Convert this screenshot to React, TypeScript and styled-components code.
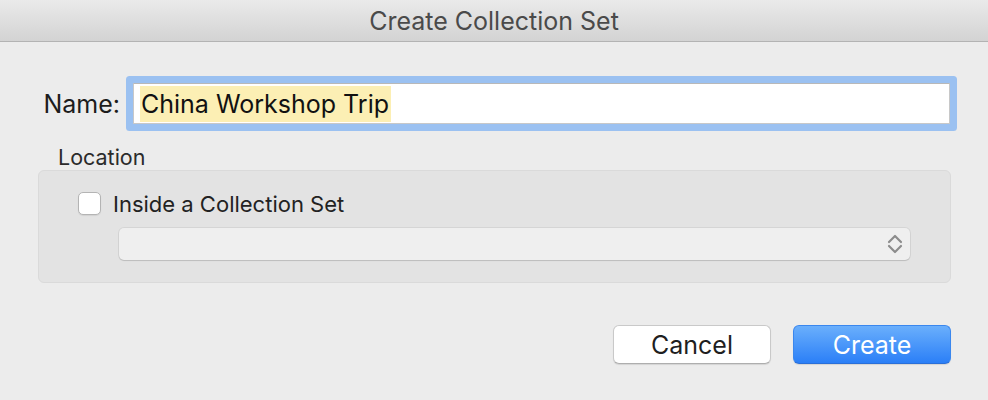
import React from "react";
import styled, { createGlobalStyle } from "styled-components";

const Global = createGlobalStyle`
  html, body { margin: 0; padding: 0; background: #ececec; }
  body { font-family: Inter, "Noto Sans", sans-serif; -webkit-font-smoothing: antialiased; }
  * { box-sizing: border-box; }
`;

const Window = styled.div`
  width: 988px;
  height: 400px;
  background: #ececec;
  display: flex;
  flex-direction: column;
  overflow: hidden;
`;

const TitleBar = styled.div`
  height: 42px;
  flex: none;
  background: linear-gradient(#eaeaea, #d3d3d3);
  border-bottom: 1px solid #b3b3b3;
  display: flex;
  align-items: center;
  justify-content: center;
  font-size: 25px;
  color: #4a4a4a;
`;

const Body = styled.div`
  padding: 41px 37px 0 38px;
  display: flex;
  flex-direction: column;
`;

const NameRow = styled.div`
  display: flex;
  align-items: center;
  height: 41px;
`;

const NameLabel = styled.label`
  width: 82px;
  text-align: right;
  font-size: 25px;
  color: #1c1c1c;
  margin-right: 13px;
`;

const TextField = styled.div`
  flex: 1;
  height: 41px;
  margin-right: 1px;
  background: #fff;
  border: 1px solid #c8c8c8;
  border-top-color: #b8b8b8;
  border-radius: 1px;
  box-shadow: 0 0 0 7px #9bc1f1;
  display: flex;
  align-items: center;
  padding-left: 6px;
`;

const Selected = styled.span`
  background: #fcefb4;
  font-size: 25px;
  color: #111;
  line-height: 36px;
  padding: 0 2px 0 1px;
`;

const SectionLabel = styled.div`
  margin: 21px 0 1px 20px;
  font-size: 21.5px;
  line-height: 24px;
  color: #2b2b2b;
`;

const GroupBox = styled.div`
  background: #e3e3e3;
  border: 1px solid #dadada;
  border-radius: 6px;
  padding: 21px 40px 22px 39px;
  display: flex;
  flex-direction: column;
  gap: 13px;
`;

const CheckRow = styled.label`
  display: flex;
  align-items: center;
  gap: 12px;
  font-size: 22px;
  color: #222;
  height: 23px;
`;

const Box = styled.span`
  width: 23px;
  height: 23px;
  background: #fff;
  border: 1px solid #b4b4b4;
  border-radius: 5px;
  box-shadow: 0 1px 1px rgba(0,0,0,0.08);
`;

const Popup = styled.div`
  margin-left: 41px;
  height: 32px;
  background: #efefef;
  border-radius: 5px;
  box-shadow: 0 0 0 1px rgba(0,0,0,0.06), 0 1px 1px rgba(0,0,0,0.12);
  display: flex;
  align-items: center;
  justify-content: flex-end;
  padding-right: 7px;
`;

const Buttons = styled.div`
  margin-top: 42px;
  display: flex;
  justify-content: flex-end;
  gap: 22px;
`;

const Button = styled.button<{ $primary?: boolean }>`
  width: 158px;
  height: 39px;
  border-radius: 6px;
  font-family: Inter, "Noto Sans", sans-serif;
  font-size: 25px;
  padding: 0;
  border: ${p => (p.$primary ? "1px solid #3a87ee" : "1px solid #c9c9c9")};
  border-bottom-color: ${p => (p.$primary ? "#2a6fd8" : "#aeaeae")};
  background: ${p => (p.$primary ? "linear-gradient(#6aaffc, #2b7ff7)" : "#fff")};
  color: ${p => (p.$primary ? "#fff" : "#1f1f1f")};
  box-shadow: 0 1px 1px rgba(0,0,0,0.1);
`;

const Chevrons = () => (
  <svg width="16" height="20" viewBox="0 0 16 20" fill="none" stroke="#8c8c8c" strokeWidth="2.2" strokeLinecap="round" strokeLinejoin="round">
    <path d="M2 8 L8 2 L14 8" />
    <path d="M2 12 L8 18 L14 12" />
  </svg>
);

export default function App() {
  return (
    <Window>
      <Global />
      <TitleBar>Create Collection Set</TitleBar>
      <Body>
        <NameRow>
          <NameLabel>Name:</NameLabel>
          <TextField>
            <Selected>China Workshop Trip</Selected>
          </TextField>
        </NameRow>
        <SectionLabel>Location</SectionLabel>
        <GroupBox>
          <CheckRow>
            <Box />
            Inside a Collection Set
          </CheckRow>
          <Popup>
            <Chevrons />
          </Popup>
        </GroupBox>
        <Buttons>
          <Button>Cancel</Button>
          <Button $primary>Create</Button>
        </Buttons>
      </Body>
    </Window>
  );
}
